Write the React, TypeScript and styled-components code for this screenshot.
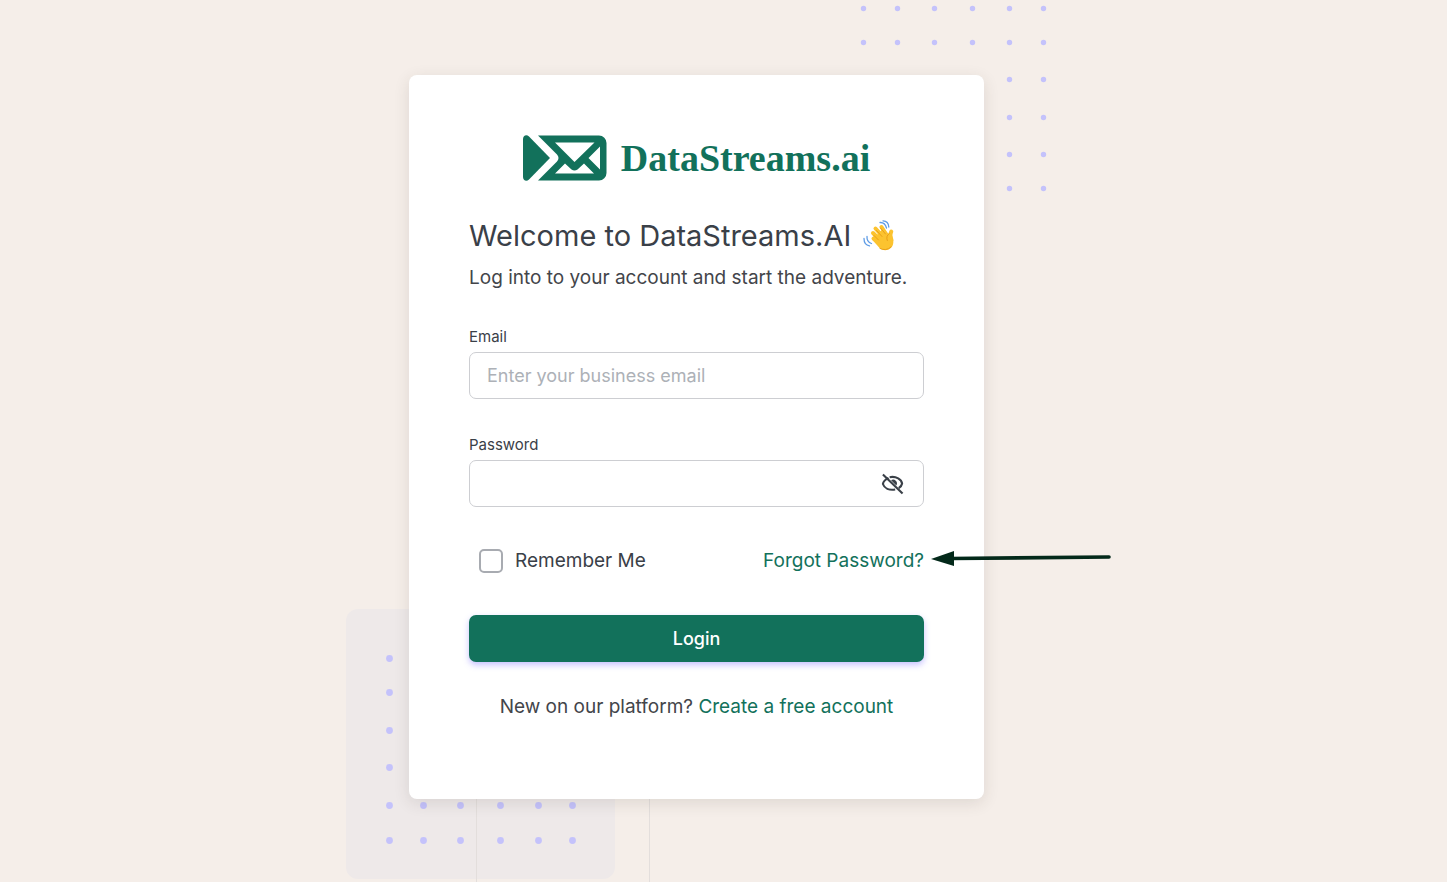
import React, { useState } from 'react';
import styled, { createGlobalStyle } from 'styled-components';

const GREEN = '#12715b';
const INK = '#3a4048';
const TEXT = '#43454a';
const LAVENDER = '#c4c2fb';

const GlobalStyle = createGlobalStyle`
  *, *::before, *::after { box-sizing: border-box; }
  body {
    margin: 0;
    background: #f5eee9;
    color: ${TEXT};
    font-family: Inter, 'Liberation Sans', sans-serif;
    font-size: 19px;
    line-height: 28px;
  }
`;

const Page = styled.main`
  display: flex;
  justify-content: center;
  align-items: center;
  min-height: 100vh;
  padding: 75px 54px 83px 0;
  overflow: hidden;
`;

const Stage = styled.div`
  position: relative;
  z-index: 0;
  width: 100%;
  max-width: 575px;
`;

const TopOrnament = styled.svg`
  position: absolute;
  z-index: -1;
  top: -75px;
  right: -69px;
`;

const BottomOrnament = styled.svg`
  position: absolute;
  z-index: -1;
  bottom: -84px;
  left: -63px;
`;

const Card = styled.section`
  padding: 56px 60px 78px;
  background: #fff;
  border-radius: 8px;
  box-shadow: 0 4px 16px rgba(60, 50, 45, 0.12);
`;

const Brand = styled.div`
  display: flex;
  justify-content: center;
  align-items: center;
  gap: 14px;
  height: 54px;
`;

const BrandName = styled.span`
  color: ${GREEN};
  font: bold 38px/54px 'Liberation Serif', serif;
`;

const Heading = styled.h1`
  display: flex;
  align-items: center;
  gap: 12px;
  margin: 31px 0 0;
  color: ${INK};
  font-size: 29px;
  line-height: 40px;
  font-weight: 400;
  white-space: nowrap;
`;

const Intro = styled.p`
  margin: 8px 0 33px;
  white-space: nowrap;
`;

const Field = styled.div`
  display: flex;
  flex-direction: column;
  gap: 3px;
  margin-bottom: 34px;
`;

const FieldLabel = styled.label`
  color: ${INK};
  font-size: 15px;
  line-height: 24px;
`;

const InputFrame = styled.div`
  display: flex;
  align-items: center;
  height: 47px;
  padding: 0 17px;
  border: 1px solid #cdced2;
  border-radius: 7px;
  &:focus-within { border-color: ${GREEN}; }
`;

const TextInput = styled.input`
  flex: 1;
  min-width: 0;
  padding: 0;
  border: 0;
  outline: 0;
  background: none;
  color: inherit;
  font: inherit;
  font-size: 18px;
  &::placeholder { color: #adb1b7; opacity: 1; }
`;

const IconButton = styled.button`
  display: flex;
  padding: 0 2px;
  border: 0;
  background: none;
  color: ${INK};
  cursor: pointer;
`;

const Options = styled.div`
  display: flex;
  justify-content: space-between;
  align-items: center;
  margin: 40px 0;
  padding-left: 10px;
`;

const Remember = styled.label`
  display: flex;
  align-items: center;
  gap: 12px;
  color: ${INK};
`;

const Checkbox = styled.input`
  appearance: none;
  width: 24px;
  height: 24px;
  margin: 0;
  border: 2px solid #a8abb1;
  border-radius: 5px;
  background: #fff;
  &:checked { background: ${GREEN}; border-color: ${GREEN}; }
`;

const Link = styled.a`
  color: ${GREEN};
  text-decoration: none;
`;

const ArrowAnchor = styled.span`
  position: relative;
`;

const Arrow = styled.svg`
  position: absolute;
  left: 100%;
  top: 0;
  margin-left: 7px;
`;

const LoginButton = styled.button`
  width: 100%;
  height: 47px;
  border: 0;
  border-radius: 7px;
  background: ${GREEN};
  color: #fff;
  font: inherit;
  font-size: 18px;
  font-weight: 500;
  box-shadow: 0 3px 6px rgba(130, 120, 255, 0.45);
  cursor: pointer;
`;

const SignUp = styled.p`
  margin: 31px 0 0;
  text-align: center;
  white-space: nowrap;
`;

const TOP_X = [10, 44, 81, 119, 156, 190];
const TOP_Y = [8, 42, 79, 117, 154, 188];
const BOTTOM_X = [43, 77, 114, 154, 192, 226];
const BOTTOM_Y = [49, 83, 121, 158, 196, 231];

function Dots({ xs, ys, r }: { xs: number[]; ys: number[]; r: number }) {
  return (
    <g fill={LAVENDER}>
      {ys.map((y) => xs.map((x) => <circle key={`${x}-${y}`} cx={x + 0.5} cy={y + 0.5} r={r} />))}
    </g>
  );
}

function LogoMark() {
  return (
    <svg width="84" height="46" viewBox="0 0 84 46" aria-hidden="true">
      <path fill={GREEN} d="M0 4C0 .5 3.500-1 6 1.500L27 23 6 44.500C3.500 47 0 45.500 0 42Z" />
      <path
        fill={GREEN}
        fillRule="evenodd"
        d="M15 .5H76a7.500 7.500 0 0 1 7.500 7.500V38a7.500 7.500 0 0 1-7.500 7.500H15L34 26.500Q37 23 34 19.500ZM32 7.500L51.500 27 71.500 7.500ZM65.500 23L77 11.500V34.500ZM42 28.500L32 38.500H71L61 28.500 54.500 34.500Q51.500 36.500 48.500 34.500Z"
      />
    </svg>
  );
}

function WavingHand() {
  return (
    <svg width="32" height="32" viewBox="0 0 32 32" role="img" aria-label="Waving hand">
      <g fill="none" stroke="#5f9ce5" strokeWidth="1.300" strokeLinecap="round">
        <path d="M17 2.500Q22 2.200 23.500 8M20 .8Q25.500 1 25.800 7" />
        <path d="M4 16.500Q3.600 22 8.500 23.500M1 18.500Q1 25 6.500 25.800" />
      </g>
      <g fill="none" stroke="#fcc32f" strokeWidth="4" strokeLinecap="round">
        <path d="M10 13L18 21M12.500 8.500L22 19M18.500 7L25 17M10.500 18.500L18 25M28.300 11.500Q26.500 15 28.500 20" />
      </g>
      <path fill="#fcc32f" d="M12 17L19 9.500 26 14Q29 12 30.300 21C31 29 22.500 32.500 17 28.500L9.500 20Z" />
      <path
        fill="none"
        stroke="#e59b16"
        strokeWidth=".9"
        strokeLinecap="round"
        d="M11 15.500L15.500 20M13.500 10.500L19 16.500M17.500 8L22.500 14M26.300 13.500Q22.500 16 24.300 20.500M17 28.500Q23 31.500 28 27"
      />
    </svg>
  );
}

function EyeOff() {
  return (
    <svg width="23" height="23" viewBox="0 0 24 24" fill="none" stroke="currentColor" aria-hidden="true">
      <g strokeWidth="2.200">
        <path d="M7.800 6.200Q2.500 9 2 12.500C3.500 17 8.500 19.200 14.800 18.200" />
        <path d="M9 5.400C16 4 21.500 8 22 12Q21.500 15 18.500 16.800" />
        <path d="M2 2.500L22.500 22.500" />
      </g>
      <path d="M10.500 8.500A4 4 0 0 1 16 14Z" fill="currentColor" stroke="none" />
    </svg>
  );
}

export default function App() {
  const [showPassword, setShowPassword] = useState(false);

  return (
    <>
      <GlobalStyle />
      <Page>
        <Stage>
          <TopOrnament width="200" height="200" aria-hidden="true">
            <Dots xs={TOP_X} ys={TOP_Y} r={2.7} />
          </TopOrnament>
          <BottomOrnament width="310" height="274" aria-hidden="true">
            <rect x="0" y="0" width="269" height="270" rx="12" fill="#eee9e9" />
            <path d="M130.500 180V274M303.500 180V274" stroke="#e3dedc" fill="none" />
            <Dots xs={BOTTOM_X} ys={BOTTOM_Y} r={3.4} />
          </BottomOrnament>

          <Card>
            <Brand>
              <LogoMark />
              <BrandName>DataStreams.ai</BrandName>
            </Brand>
            <Heading>
              Welcome to DataStreams.AI
              <WavingHand />
            </Heading>
            <Intro>Log into to your account and start the adventure.</Intro>

            <form onSubmit={(e) => e.preventDefault()}>
              <Field>
                <FieldLabel htmlFor="email">Email</FieldLabel>
                <InputFrame>
                  <TextInput id="email" type="email" placeholder="Enter your business email" />
                </InputFrame>
              </Field>
              <Field>
                <FieldLabel htmlFor="password">Password</FieldLabel>
                <InputFrame>
                  <TextInput id="password" type={showPassword ? 'text' : 'password'} />
                  <IconButton
                    type="button"
                    aria-label="Toggle password visibility"
                    onClick={() => setShowPassword(!showPassword)}
                  >
                    <EyeOff />
                  </IconButton>
                </InputFrame>
              </Field>

              <Options>
                <Remember>
                  <Checkbox type="checkbox" />
                  Remember Me
                </Remember>
                <ArrowAnchor>
                  <Link href="#forgot">Forgot Password?</Link>
                  <Arrow width="182" height="24" aria-hidden="true">
                    <path d="M20 11.500L178 10" stroke="#03291a" strokeWidth="3.600" strokeLinecap="round" />
                    <path d="M0 12L23 4V19Z" fill="#03291a" />
                  </Arrow>
                </ArrowAnchor>
              </Options>

              <LoginButton type="submit">Login</LoginButton>
            </form>

            <SignUp>
              New on our platform? <Link href="#signup">Create a free account</Link>
            </SignUp>
          </Card>
        </Stage>
      </Page>
    </>
  );
}
